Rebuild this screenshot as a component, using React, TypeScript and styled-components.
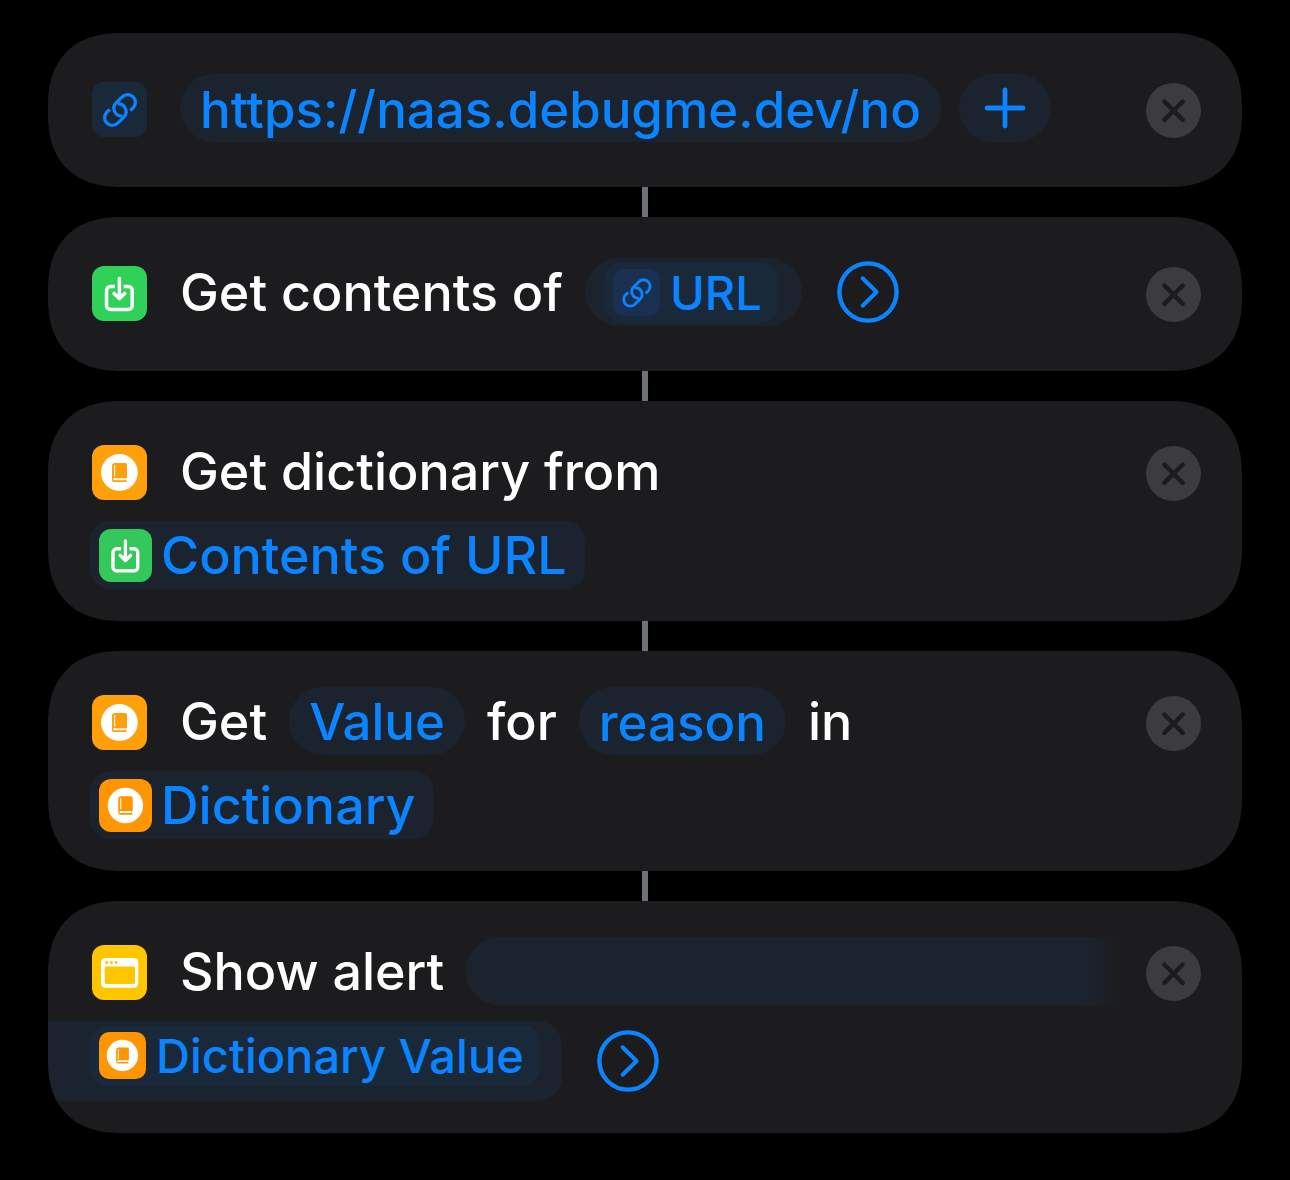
import React from "react";
import styled, { createGlobalStyle } from "styled-components";

const blue = "#0a84ff";

const GlobalStyle = createGlobalStyle`
  *, *::before, *::after { box-sizing: border-box; }
  body {
    margin: 0;
    background: #000;
    font-family: Inter, "Liberation Sans", sans-serif;
    font-weight: 500;
    -webkit-font-smoothing: antialiased;
  }
  button, input { font: inherit; color: inherit; margin: 0; }
`;

const Page = styled.main`
  padding: 33px 48px 47px;
`;

const ActionList = styled.ol`
  list-style: none;
  margin: 0;
  padding: 0;
`;

const Step = styled.li`
  &:not(:last-child)::after {
    content: "";
    display: block;
    width: 6px;
    height: 30px;
    margin: 0 auto;
    background: #6f717a;
  }
`;

const Card = styled.article<{ $single?: boolean }>`
  display: flex;
  align-items: flex-start;
  padding: ${(p) => (p.$single ? "41px 41px 45px 42px" : "36px 41px 32px 42px")};
  overflow: hidden;
  background: #1c1c1e;
  border-radius: 64px;

  @supports (corner-shape: squircle) {
    border-radius: 74px;
    corner-shape: superellipse(1.25);
  }
`;

const Content = styled.div`
  flex: 1;
  min-width: 0;
  display: flex;
  flex-direction: column;
  gap: 16px;
`;

const Line = styled.div`
  display: flex;
  align-items: center;
  gap: 22px;
  min-height: 68px;
  color: #fff;
  font-size: 52px;
  line-height: 66px;
  white-space: nowrap;
`;

const Label = styled.span`
  padding-top: 2px;
`;

const Tile = styled.span<{ $color: string; $size?: number }>`
  flex: none;
  display: block;
  width: ${(p) => p.$size ?? 55}px;
  height: ${(p) => p.$size ?? 55}px;
  border-radius: ${(p) => (p.$size === 47 ? 10 : 12)}px;
  background: ${(p) => p.$color};
  color: ${(p) => p.$color};

  svg { display: block; width: 100%; height: 100%; }
`;

const LeadTile = styled(Tile)`
  margin: 2px 11px 0 2px;
`;

const pill = `
  height: 68px;
  border: 0;
  border-radius: 34px;
  background: #1b232e;
  color: ${blue};
`;

const PillInput = styled.input`
  ${pill}
  field-sizing: content;
  padding: 2px 20px 0;
  font-size: 51px;
  outline: none;
`;

const PillButton = styled.button`
  ${pill}
  padding: 2px 20px 0;
  font-size: 51px;
`;

const UrlRow = styled.div`
  display: flex;
  gap: 18px;
`;

const AddButton = styled.button`
  ${pill}
  width: 92px;
  padding: 0;
  display: grid;
  place-items: center;
`;

const VariableButton = styled.button`
  height: 68px;
  padding: 0 18px 0 9px;
  border: 0;
  border-radius: 20px;
  background: #1b232e;
  color: ${blue};
  display: flex;
  align-items: center;
  gap: 9px;
`;

const TokenSlot = styled.div`
  ${pill}
  padding: 0 24px 0 19px;
  display: flex;
  align-items: center;
`;

const Token = styled.button`
  height: 61px;
  padding: 0 16px 0 9px;
  border: 0;
  border-radius: 18px;
  background: #1a293a;
  color: ${blue};
  font-size: 47px;
  line-height: 61px;
  display: flex;
  align-items: center;
  gap: 10px;
`;

const AlertFieldStart = styled.span`
  flex: 1;
  height: 68px;
  margin-right: 25px;
  border-radius: 34px 0 0 34px;
  background: linear-gradient(to left, transparent, #1b232e 36px);
`;

const AlertFieldEnd = styled.div`
  height: 80px;
  margin-left: -42px;
  padding: 4px 22px 0 42px;
  border-radius: 0 24px 24px 0;
  background: #1b232e;
`;

const ShowMore = styled.button`
  flex: none;
  width: 62px;
  height: 62px;
  margin-left: 13px;
  padding: 0;
  border: 0;
  background: none;
  color: ${blue};

  svg { display: block; }
`;

const RemoveButton = styled.button`
  flex: none;
  width: 55px;
  height: 55px;
  margin-top: 9px;
  padding: 0;
  border: 0;
  border-radius: 50%;
  background: #3c3b40;
  color: #1c1c1e;

  svg { display: block; }
`;

const LinkIcon = () => (
  <svg viewBox="0 0 55 55" fill="none" stroke={blue} strokeWidth="3.3" aria-hidden="true">
    <g transform="translate(28 28) rotate(-45)">
      <path d="M6.8 7.7L10.9 7.7A7.7 7.7 0 0 0 10.9 -7.7H2.3A7.7 7.7 0 0 0 -2.6 5.9" />
      <path d="M-6.8 -7.7L-10.9 -7.7A7.7 7.7 0 0 0 -10.9 7.7H-2.3A7.7 7.7 0 0 0 2.6 -5.9" />
    </g>
  </svg>
);

const DownloadIcon = () => (
  <svg viewBox="0 0 55 55" fill="none" stroke="#fff" strokeWidth="3.5" strokeLinecap="round" strokeLinejoin="round" aria-hidden="true">
    <path d="M23 20.5H18.5A4 4 0 0 0 14.5 24.5V39.5A4 4 0 0 0 18.5 43.5H36.2A4 4 0 0 0 40.2 39.5V24.5A4 4 0 0 0 36.2 20.5H31.7" strokeLinecap="butt" />
    <path d="M27.4 12.5V32.4M22 27.4L27.4 32.6L32.8 27.4" />
  </svg>
);

const BookIcon = () => (
  <svg viewBox="0 0 55 55" aria-hidden="true">
    <circle cx="27.4" cy="27.5" r="18.4" fill="#fff" />
    <path
      fill="currentColor"
      d="M22.8 18H33.2Q35 18 35 19.8V32.2Q35 33 34.2 33.3Q33.6 34.4 34.3 35.6Q35.2 36 34.8 36.6Q34.6 37 34 37H22.6Q20 37 20 34.4V20.8Q20 18 22.8 18Z"
    />
    <path d="M22.6 20V31.4" stroke="#fff" strokeWidth="1.1" />
    <path d="M22.2 34.2H32.8" stroke="#fff" strokeWidth="2" strokeLinecap="round" />
  </svg>
);

const WindowIcon = () => (
  <svg viewBox="0 0 55 55" aria-hidden="true">
    <rect x="9" y="13" width="37.3" height="29.8" rx="4.5" fill="#fff" />
    <rect x="12.8" y="21.4" width="30.2" height="17.6" rx="1.4" fill="currentColor" />
    <g fill="currentColor">
      <circle cx="14.8" cy="17.4" r="1.5" />
      <circle cx="19.4" cy="17.4" r="1.5" />
      <circle cx="24" cy="17.4" r="1.5" />
    </g>
  </svg>
);

const MoreIcon = () => (
  <svg width="62" height="62" viewBox="0 0 62 62" fill="none" stroke="currentColor" strokeLinecap="round" strokeLinejoin="round" aria-hidden="true">
    <circle cx="31" cy="31" r="28.6" strokeWidth="4.4" />
    <path d="M25.6 17.3L39.6 31L25.6 44.7" strokeWidth="4" />
  </svg>
);

const PlusIcon = () => (
  <svg width="42" height="42" viewBox="0 0 42 42" stroke="currentColor" strokeWidth="4.8" strokeLinecap="round" aria-hidden="true">
    <path d="M21 3V39M3 21H39" />
  </svg>
);

const Remove = ({ action }: { action: string }) => (
  <RemoveButton type="button" aria-label={`Remove ${action}`}>
    <svg width="55" height="55" viewBox="0 0 55 55" stroke="currentColor" strokeWidth="4.4" strokeLinecap="round" aria-hidden="true">
      <path d="M18.3 18.5L36.7 36.9M36.7 18.5L18.3 36.9" />
    </svg>
  </RemoveButton>
);

const More = () => (
  <ShowMore type="button" aria-label="Show more">
    <MoreIcon />
  </ShowMore>
);

type ActionProps = { name: string; single?: boolean; children: React.ReactNode };

const Action = ({ name, single, children }: ActionProps) => (
  <Step>
    <Card $single={single}>
      <Content>{children}</Content>
      <Remove action={name} />
    </Card>
  </Step>
);

export default function App() {
  return (
    <>
      <GlobalStyle />
      <Page>
        <ActionList>
          <Action name="URL" single>
            <Line>
              <LeadTile $color="#1a293a"><LinkIcon /></LeadTile>
              <UrlRow>
                <PillInput aria-label="URL" defaultValue="https://naas.debugme.dev/no" spellCheck={false} />
                <AddButton type="button" aria-label="Add URL"><PlusIcon /></AddButton>
              </UrlRow>
            </Line>
          </Action>

          <Action name="Get contents of URL" single>
            <Line>
              <LeadTile $color="#30d158"><DownloadIcon /></LeadTile>
              <Label>Get contents of</Label>
              <TokenSlot>
                <Token type="button">
                  <Tile $color="#1a3050" $size={47}><LinkIcon /></Tile>
                  URL
                </Token>
              </TokenSlot>
              <More />
            </Line>
          </Action>

          <Action name="Get dictionary">
            <Line>
              <LeadTile $color="#ff9f0a"><BookIcon /></LeadTile>
              <Label>Get dictionary from</Label>
            </Line>
            <Line>
              <VariableButton type="button">
                <Tile $color="#34c759" $size={53}><DownloadIcon /></Tile>
                <Label>Contents of URL</Label>
              </VariableButton>
            </Line>
          </Action>

          <Action name="Get dictionary value">
            <Line>
              <LeadTile $color="#ff9f0a"><BookIcon /></LeadTile>
              <Label>Get</Label>
              <PillButton type="button">Value</PillButton>
              <Label>for</Label>
              <PillInput aria-label="Key" defaultValue="reason" spellCheck={false} />
              <Label>in</Label>
            </Line>
            <Line>
              <VariableButton type="button">
                <Tile $color="#ff9500" $size={53}><BookIcon /></Tile>
                <Label>Dictionary</Label>
              </VariableButton>
            </Line>
          </Action>

          <Action name="Show alert">
            <Line>
              <LeadTile $color="#ffc600"><WindowIcon /></LeadTile>
              <Label>Show alert</Label>
              <AlertFieldStart />
            </Line>
            <Line>
              <AlertFieldEnd>
                <Token type="button">
                  <Tile $color="#ff9500" $size={47}><BookIcon /></Tile>
                  Dictionary Value
                </Token>
              </AlertFieldEnd>
              <More />
            </Line>
          </Action>
        </ActionList>
      </Page>
    </>
  );
}
